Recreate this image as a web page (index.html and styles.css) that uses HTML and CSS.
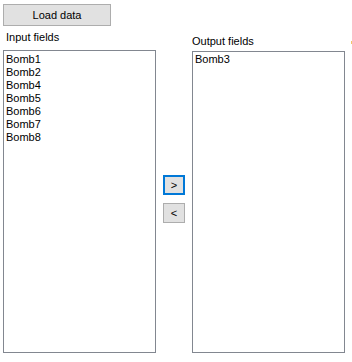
FILE: index.html
```html
<!DOCTYPE html>
<html>
<head>
<meta charset="utf-8">
<link rel="stylesheet" href="styles.css">
</head>
<body>
<button class="btn load">Load data</button>
<div class="panels">
  <div class="col left">
    <div class="label">Input fields</div>
    <div class="list list-left">
      <div class="item">Bomb1</div>
      <div class="item">Bomb2</div>
      <div class="item">Bomb4</div>
      <div class="item">Bomb5</div>
      <div class="item">Bomb6</div>
      <div class="item">Bomb7</div>
      <div class="item">Bomb8</div>
    </div>
  </div>
  <div class="mid">
    <button class="btn arrow focus">&gt;</button>
    <button class="btn arrow">&lt;</button>
  </div>
  <div class="col right">
    <div class="label label-right">Output fields</div>
    <div class="list list-right">
      <div class="item">Bomb3</div>
    </div>
  </div>
  <div class="clip"></div>
</div>
</body>
</html>
```
FILE: styles.css
```css
html, body {
  margin: 0;
  padding: 0;
  background: #ffffff;
  font-family: "Liberation Sans", Arial, sans-serif;
  font-size: 11px;
  color: #000;
}
.btn {
  display: block;
  box-sizing: border-box;
  background: #e1e1e1;
  border: 1px solid #adadad;
  font-family: "Liberation Sans", Arial, sans-serif;
  font-size: 11px;
  color: #000;
  padding: 0;
  margin: 0;
}
.load {
  margin: 4px 0 0 3px;
  width: 108px;
  height: 22px;
}
.panels {
  display: flex;
  align-items: flex-start;
  margin-top: 5px;
}
.col {
  width: 153px;
  display: flex;
  flex-direction: column;
}
.left {
  margin-left: 3px;
}
.label {
  height: 19px;
  line-height: 13px;
  padding-left: 3px;
  box-sizing: border-box;
}
.right {
  padding-top: 3px;
}
.label-right {
  height: 17px;
  padding-top: 1px;
  padding-left: 0;
}
.list {
  box-sizing: border-box;
  border: 1px solid #828790;
  padding: 2px 2px 1px;
  background: #fff;
}
.list-left {
  height: 303px;
}
.list-right {
  height: 302px;
  padding-top: 1px;
}
.item {
  line-height: 13px;
  height: 13px;
  white-space: nowrap;
}
.mid {
  width: 22px;
  margin: 0 7px;
  padding-top: 144px;
  display: flex;
  flex-direction: column;
  gap: 8px;
}
.arrow {
  width: 22px;
  height: 20px;
  line-height: 16px;
}
.focus {
  border: 2px solid #0078d7;
}
.clip {
  width: 1px;
  height: 3px;
  margin-left: 6px;
  margin-top: 10px;
  background: #f2c66a;
}
```
